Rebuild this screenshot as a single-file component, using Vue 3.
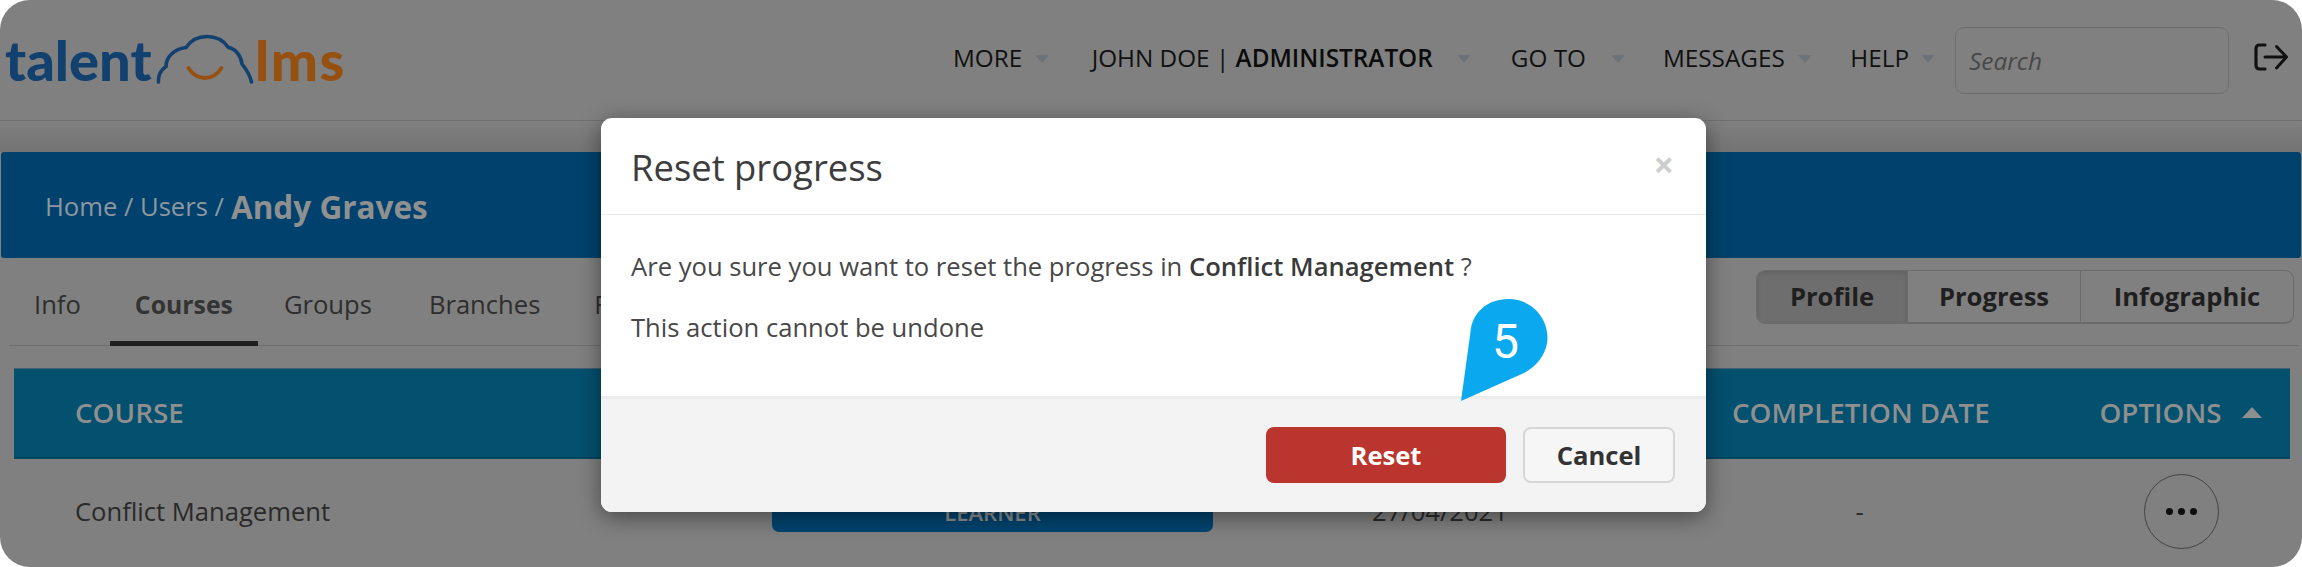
<script setup>
const navItems = [
  { key: 'more', label: 'MORE' },
  { key: 'user', label: 'JOHN DOE | ', strong: 'ADMINISTRATOR' },
  { key: 'goto', label: 'GO TO' },
  { key: 'msg', label: 'MESSAGES' },
  { key: 'help', label: 'HELP' }
]
const tabs = ['Info', 'Courses', 'Groups', 'Branches', 'Files']
</script>

<template>
  <div class="frame">
    <header class="topbar">
      <div class="logo">
        <span class="logo-talent">talent</span>
        <svg class="cloud" width="98" height="52" viewBox="156 30 98 52" fill="none" aria-hidden="true">
          <path d="M158.500 79C158 72 161 67 166 63.500C166 54 174 46 186 44.500C191 37 199 33.500 207 33.500C217 33.500 224 38 228.500 44.500C236 46 241 53 242 61C246 66 250 72 251.500 79" stroke="#12416f" stroke-width="3.600" stroke-linecap="round"/>
          <path d="M188.500 65C193 72 199 75 205 75C211 75 217 72 221.500 65" stroke="#96500f" stroke-width="3.800" stroke-linecap="round"/>
        </svg>
        <span class="logo-lms">lms</span>
      </div>
      <nav class="nav">
        <a v-for="n in navItems" :key="n.key" class="nav-item" :class="'nav-' + n.key">
          <span>{{ n.label }}<b v-if="n.strong">{{ n.strong }}</b></span>
          <i class="caret"></i>
        </a>
        <input class="search" placeholder="Search" />
        <svg class="logout" width="36" height="28" viewBox="0 0 36 28" fill="none" aria-hidden="true">
          <path d="M12 2H6.500C4.500 2 3 3.500 3 5.500V22.500C3 24.500 4.500 26 6.500 26H12" stroke="#111" stroke-width="3.200" stroke-linecap="round"/>
          <path d="M12 14H33M23.500 3.500L33.500 14L23.500 25" stroke="#111" stroke-width="3" stroke-linecap="round" stroke-linejoin="round"/>
        </svg>
      </nav>
    </header>

    <div class="hero-gap"></div>
    <section class="hero">
      <span class="crumbs">Home / Users /</span><strong class="crumb-name">Andy Graves</strong>
    </section>

    <div class="tabbar">
      <ul class="tabs">
        <li v-for="t in tabs" :key="t" class="tab" :class="{ active: t === 'Courses' }">{{ t }}</li>
      </ul>
      <div class="segment">
        <span class="seg seg-profile on">Profile</span>
        <span class="seg seg-progress">Progress</span>
        <span class="seg seg-info">Infographic</span>
      </div>
    </div>

    <div class="table">
      <div class="thead">
        <span class="c1">COURSE</span>
        <span class="c2"></span>
        <span class="c3"></span>
        <span class="c4">COMPLETION DATE</span>
        <span class="c5">OPTIONS<i class="sort"></i></span>
      </div>
      <div class="trow">
        <span class="c1">Conflict Management</span>
        <span class="c2"><span class="role">LEARNER</span></span>
        <span class="c3">27/04/2021</span>
        <span class="c4">-</span>
        <span class="c5"><button class="more"><i></i><i></i><i></i></button></span>
      </div>
    </div>

    <div class="modal">
      <div class="m-head">
        <h3>Reset progress</h3>
        <span class="close">×</span>
      </div>
      <div class="m-body">
        <p>Are you sure you want to reset the progress in <b>Conflict Management</b> ?</p>
        <p>This action cannot be undone</p>
      </div>
      <div class="m-foot">
        <button class="btn-reset">Reset</button>
        <button class="btn-cancel">Cancel</button>
      </div>
    </div>

    <div class="pin">
      <svg width="92" height="106" viewBox="0 0 92 106" aria-hidden="true">
        <path d="M2 104L11.500 35C13 16 28 2 49.500 2C71 2 88.500 19 88.500 40.500C88.500 55 79 69 65 76Z" fill="#0aa9ef"/>
      </svg>
      <span class="pin-num">5</span>
    </div>
  </div>
</template>

<style>
html, body { margin: 0; background: #fff; }
</style>

<style scoped>
.frame {
  position: relative;
  width: 2302px;
  height: 567px;
  overflow: hidden;
  border-radius: 30px;
  background: #808080;
  font-family: "Open Sans", "Liberation Sans", sans-serif;
  color: #2b2b2b;
}
.topbar {
  display: flex;
  justify-content: space-between;
  align-items: flex-start;
  height: 120px;
  border-bottom: 1.500px solid #6f6f6f;
}
.logo {
  display: flex;
  align-items: flex-start;
  padding: 30px 0 0 5px;
  font-family: Lato, sans-serif;
  font-weight: 900;
  font-size: 56px;
  line-height: 60px;
}
.logo-talent { color: #12416f; width: 151px; }
.logo-lms { color: #96500f; margin-left: 1px; letter-spacing: 1.500px; }
.cloud { margin-top: 3px; }
.nav {
  display: flex;
  align-items: flex-start;
  padding: 27px 13px 0 0;
}
.nav-item {
  display: flex;
  align-items: center;
  height: 60px;
  font-size: 24.300px;
  color: #111;
  white-space: pre;
}
.nav-item b { font-weight: 600; color: #0b0b0b; }
.caret {
  width: 0;
  height: 0;
  margin-top: 4px;
  border-left: 7.500px solid transparent;
  border-right: 7.500px solid transparent;
  border-top: 8px solid #6d7379;
}
.nav-more .caret, .nav-msg .caret { margin-left: 13px; }
.nav-user .caret { margin-left: 24px; }
.nav-goto .caret { margin-left: 25px; }
.nav-help .caret { margin-left: 12px; }
.nav-more { margin-right: 42.500px; }
.nav-user { margin-right: 40px; }
.nav-goto { margin-right: 38px; }
.nav-msg { margin-right: 38.500px; }
.nav-help { margin-right: 20px; }
.search {
  width: 274px;
  height: 67px;
  box-sizing: border-box;
  border: 1.500px solid #6e6e6e;
  border-radius: 9px;
  background: transparent;
  padding: 0 13px;
  font: italic 500 24.400px "Open Sans", sans-serif;
  outline: none;
}
.search::placeholder { color: #484848; opacity: 1; }
.logout { margin: 16px 0 0 24px; }

.hero-gap {
  height: 31px;
  background: linear-gradient(#808080, #747474);
}
.hero {
  display: flex;
  align-items: center;
  gap: 7px;
  height: 106px;
  margin: 0 1px;
  padding: 2px 0 0 44px;
  box-sizing: border-box;
  background: #00426d;
  border-radius: 3px;
  white-space: pre;
}
.crumbs { font-size: 25.600px; color: #8e979f; }
.crumb-name { font-size: 31.500px; font-weight: 700; color: #909090; }

.tabbar {
  display: flex;
  justify-content: space-between;
  align-items: flex-start;
  height: 87px;
  margin: 0 4px 0 9px;
  border-bottom: 1.500px solid #6f6f6f;
}
.tabs {
  display: flex;
  list-style: none;
  margin: 0;
  padding: 0;
}
.tab {
  box-sizing: border-box;
  height: 88px;
  padding: 30px 25px 0;
  margin-right: 4px;
  font-size: 25.600px;
  line-height: 34px;
  color: #2e2e2e;
}
.tab:nth-child(3) { margin-right: 7px; }
.tab.active {
  padding-top: 29px;
  margin-right: 1px;
  font-weight: 700;
  color: #333;
  font-size: 24.800px;
  border-bottom: 5px solid #1f1f1f;
}
.segment {
  display: flex;
  margin: 12px 4px 0 0;
  height: 54px;
  box-sizing: border-box;
  border: 1.500px solid #6b6b6b;
  border-bottom-width: 2px;
  border-radius: 9px;
  overflow: hidden;
}
.seg {
  display: flex;
  align-items: center;
  justify-content: center;
  box-sizing: border-box;
  font-size: 25.600px;
  font-weight: 700;
  color: #1f1f1f;
  border-left: 1.500px solid #6b6b6b;
}
.seg-profile { width: 150px; border-left: 0; }
.seg-progress { width: 173px; }
.seg-info { width: 213px; }
.seg.on { background: #6e6e6e; box-shadow: inset 0 2px 5px rgba(0,0,0,.12); }

.table { margin: 22px 12px 0 14px; }
.thead, .trow {
  display: grid;
  grid-template-columns: 744px 600px 360px 283px 289px;
  align-items: center;
}
.thead {
  height: 91px;
  box-sizing: border-box;
  background: #04506f;
  border-top: 1px solid #40616f;
  border-bottom: 2px solid #03465f;
  padding-bottom: 2px;
  font-size: 27.800px;
  font-weight: 600;
  color: #8f8f8f;
}
.trow { height: 104px; font-size: 25.600px; color: #2a2a2a; }
.c1 { padding-left: 61px; }
.c2, .c3 { padding: 0 14px; }
.c4 { padding: 0 14px; text-align: center; white-space: nowrap; }
.c5 { padding-left: 72px; display: flex; justify-content: center; align-items: center; }
.thead .c5 { padding-left: 70px; }
.sort {
  width: 0;
  height: 0;
  margin-left: 20px;
  border-left: 10px solid transparent;
  border-right: 10px solid transparent;
  border-bottom: 11px solid #8f8f8f;
}
.role {
  display: block;
  width: 441px;
  height: 39px;
  line-height: 39px;
  margin-top: 2px;
  border-radius: 7px;
  background: #00446f;
  color: #8f8f8f;
  font-size: 22px;
  font-weight: 600;
  text-align: center;
}
.more {
  display: flex;
  align-items: center;
  justify-content: center;
  gap: 5px;
  width: 75px;
  height: 75px;
  padding: 0;
  border: 1.500px solid #444;
  border-radius: 50%;
  background: transparent;
}
.more i { width: 7px; height: 7px; border-radius: 50%; background: #0d0d0d; }

.modal {
  position: absolute;
  left: 601px;
  top: 118px;
  width: 1105px;
  height: 394px;
  display: flex;
  flex-direction: column;
  background: #fff;
  border-radius: 11px;
  overflow: hidden;
  box-shadow: 0 5px 22px rgba(0,0,0,.45);
  color: #484848;
}
.m-head {
  display: flex;
  justify-content: space-between;
  align-items: flex-start;
  height: 96px;
  padding: 0 32px 0 30px;
  border-bottom: 1px solid #eaeaea;
  flex: none;
}
.m-head h3 {
  margin: 0;
  padding-top: 27px;
  font-size: 36.400px;
  line-height: 44px;
  font-weight: 500;
  color: #3d3d3d;
}
.close {
  font-size: 36px;
  line-height: 40px;
  margin-top: 27px;
  font-weight: 700;
  color: #cdcdcd;
}
.m-body {
  flex: 1;
  padding: 34px 30px 0;
  font-size: 25.600px;
  line-height: 36px;
}
.m-body p { margin: 0 0 25px; }
.m-body b { font-weight: 600; color: #3a3a3a; }
.m-foot {
  flex: none;
  display: flex;
  justify-content: flex-end;
  gap: 17px;
  box-sizing: border-box;
  height: 116px;
  padding: 28px 31px 0 0;
  background: #f3f3f3;
  border-top: 3px solid #ececec;
}
.m-foot button {
  height: 56px;
  font-family: inherit;
  font-size: 25.600px;
  font-weight: 700;
  border-radius: 8px;
}
.btn-reset {
  width: 240px;
  border: 0;
  background: #bb352f;
  color: #fff;
}
.btn-cancel {
  width: 152px;
  border: 2px solid #d6d6d6;
  background: #f6f6f6;
  color: #333;
}

.pin {
  position: absolute;
  left: 1459px;
  top: 297px;
  width: 92px;
  height: 106px;
}
.pin svg { display: block; }
.pin-num {
  position: absolute;
  left: 33px;
  top: 17px;
  font-family: Roboto, sans-serif;
  font-size: 48px;
  line-height: 56px;
  color: #fff;
}
</style>
